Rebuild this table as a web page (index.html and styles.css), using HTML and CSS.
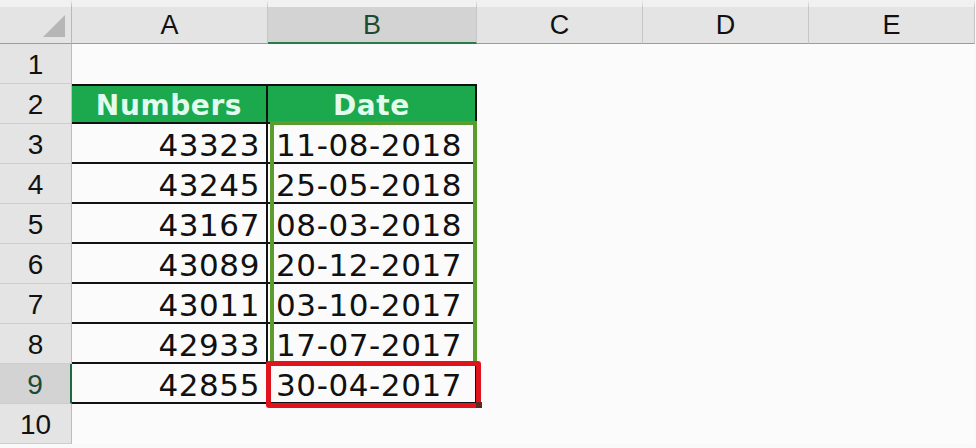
FILE: index.html
```html
<!DOCTYPE html>
<html>
<head>
<meta charset="utf-8">
<link rel="stylesheet" href="styles.css">
</head>
<body>
<div class="sheet">
  <div class="ch corner"><span class="tri"></span></div>
  <div class="ch">A</div>
  <div class="ch sel">B</div>
  <div class="ch">C</div>
  <div class="ch">D</div>
  <div class="ch">E</div>

  <div class="rh">1</div><div class="c"></div><div class="c"></div><div class="c"></div><div class="c"></div><div class="c"></div>

  <div class="rh">2</div><div class="c hd">Numbers</div><div class="c hd hb">Date</div><div class="c"></div><div class="c"></div><div class="c"></div>

  <div class="rh">3</div><div class="c t num">43323</div><div class="c t tb dt">11-08-2018</div><div class="c"></div><div class="c"></div><div class="c"></div>
  <div class="rh">4</div><div class="c t num">43245</div><div class="c t tb dt">25-05-2018</div><div class="c"></div><div class="c"></div><div class="c"></div>
  <div class="rh">5</div><div class="c t num">43167</div><div class="c t tb dt">08-03-2018</div><div class="c"></div><div class="c"></div><div class="c"></div>
  <div class="rh">6</div><div class="c t num">43089</div><div class="c t tb dt">20-12-2017</div><div class="c"></div><div class="c"></div><div class="c"></div>
  <div class="rh">7</div><div class="c t num">43011</div><div class="c t tb dt">03-10-2017</div><div class="c"></div><div class="c"></div><div class="c"></div>
  <div class="rh">8</div><div class="c t num">42933</div><div class="c t tb dt">17-07-2017</div><div class="c"></div><div class="c"></div><div class="c"></div>
  <div class="rh rsel">9</div><div class="c t num">42855</div><div class="c t tb dt">30-04-2017</div><div class="c"></div><div class="c"></div><div class="c"></div>
  <div class="rh">10</div><div class="c"></div><div class="c"></div><div class="c"></div><div class="c"></div><div class="c"></div>

  <div class="selection"></div>
  <div class="redbox"></div>
  <div class="handle"></div>
</div>
</body>
</html>
```

FILE: styles.css
```css
html, body {
  margin: 0;
  padding: 0;
  background: #f9f9f9;
}

.sheet {
  position: relative;
  display: grid;
  grid-template-columns: 72px 196px 209px 166px 166px 166px;
  grid-template-rows: 44px repeat(10, 40px);
  width: 975px;
  font-family: "DejaVu Sans", sans-serif;
  color: #111;
}

.ch {
  box-sizing: border-box;
  background: #e4e4e4;
  border-top: 7px solid #f1f1f1;
  border-bottom: 1px solid #9c9c9c;
  border-right: 1px solid #c6c6c6;
  display: flex;
  align-items: center;
  justify-content: center;
  font-family: "Liberation Sans", Arial, sans-serif;
  font-size: 27px;
  color: #111;
  padding-top: 1px;
}

.ch.sel {
  background: #d3d3d3;
  border-bottom: 2px solid #2a7a4a;
  color: #1d4a32;
}

.corner {
  position: relative;
  border-right: 1px solid #b8b8b8;
}

.tri {
  position: absolute;
  right: 6px;
  bottom: 6px;
  width: 0;
  height: 0;
  border-left: 22px solid transparent;
  border-bottom: 22px solid #b6b6b6;
}

.rh {
  box-sizing: border-box;
  background: #e4e4e4;
  border-right: 1px solid #bcbcbc;
  border-bottom: 1px solid #cdcdcd;
  display: flex;
  align-items: center;
  justify-content: center;
  font-family: "Liberation Sans", Arial, sans-serif;
  font-size: 28px;
  color: #111;
  padding-top: 2px;
}

.rh.rsel {
  background: #d3d3d3;
  border-right: 2px solid #1e6a3e;
  color: #1d4a32;
}

.c {
  box-sizing: border-box;
  background: #fbfbfb;
}

.hd {
  background: #1ca84c;
  border-top: 2px solid #111;
  border-bottom: 2px solid #111;
  border-right: 2px solid #111;
  color: #e2fbee;
  font-weight: bold;
  font-size: 28px;
  display: flex;
  align-items: center;
  justify-content: center;
  letter-spacing: 0.6px;
  padding-top: 2px;
}

.t {
  border-bottom: 2px solid #111;
  border-right: 2px solid #111;
  font-size: 31px;
  display: flex;
  align-items: center;
  letter-spacing: 0.6px;
  padding-top: 3px;
}

.num {
  justify-content: flex-end;
  padding-right: 6px;
}

.dt {
  justify-content: flex-start;
  padding-left: 8px;
}

.selection {
  position: absolute;
  left: 270px;
  top: 121px;
  width: 207px;
  height: 245px;
  box-sizing: border-box;
  border: 4px solid #5c9c2c;
  border-bottom: none;
}

.redbox {
  position: absolute;
  left: 266px;
  top: 361px;
  width: 215px;
  height: 47px;
  box-sizing: border-box;
  border: 5px solid #e0141c;
  border-radius: 3px;
}

.handle {
  position: absolute;
  left: 476px;
  top: 402px;
  width: 6px;
  height: 6px;
  background: #5a2a20;
}
```
